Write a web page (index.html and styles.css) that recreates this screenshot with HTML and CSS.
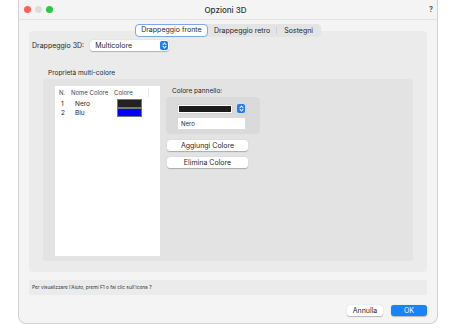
FILE: index.html
```html
<!DOCTYPE html>
<html lang="it">
<head>
	<meta charset="UTF-8">
	<title>Opzioni 3D</title>
	<link rel="stylesheet" href="styles.css">
</head>
<body>
	<div class="window">
		<div class="titlebar">
			<div class="lights">
				<span class="light red"></span>
				<span class="light gray"></span>
				<span class="light green"></span>
			</div>
			<div class="title">Opzioni 3D</div>
			<div class="help-q">?</div>
		</div>
		<div class="content">
			<div class="tabs">
				<span class="tab active">Drappeggio fronte</span>
				<span class="tab">Drappeggio retro</span>
				<span class="tab-sep"></span>
				<span class="tab last">Sostegni</span>
			</div>
			<div class="tabbox">
				<div class="row-3d">
					<span class="label">Drappeggio 3D:</span>
					<div class="popup">
						<span>Multicolore</span>
						<span class="stepper"></span>
					</div>
				</div>
				<div class="section-title">Proprietà multi-colore</div>
				<div class="inner">
					<div class="list">
						<div class="list-head">
							<span class="col-n">N.</span>
							<span class="col-name">Nome Colore</span>
							<span class="col-col">Colore</span>
						</div>
						<div class="list-row">
							<span class="col-n">1</span>
							<span class="col-name">Nero</span>
							<span class="swatch black"></span>
						</div>
						<div class="list-row">
							<span class="col-n">2</span>
							<span class="col-name">Blu</span>
							<span class="swatch blue"></span>
						</div>
					</div>
					<div class="side">
						<div class="side-label">Colore pannello:</div>
						<div class="panel-box">
							<div class="color-popup">
								<span class="color-bar"></span>
								<span class="stepper"></span>
							</div>
							<div class="field">Nero</div>
						</div>
						<div class="btn wide">Aggiungi Colore</div>
						<div class="btn wide">Elimina Colore</div>
					</div>
				</div>
			</div>
			<div class="helpbar">Per visualizzare l'Aiuto, premi F1 o fai clic sull'icona ?</div>
			<div class="footer">
				<div class="btn">Annulla</div>
				<div class="btn primary">OK</div>
			</div>
		</div>
	</div>
</body>
</html>
```
FILE: styles.css
```css
*{
	margin: 0;
	padding: 0;
	box-sizing: border-box;
}
body{
	background: #fff;
	font-family: Inter, "Liberation Sans", sans-serif;
	font-size: 7px;
	color: #262626;
}
.window{
	margin-left: 18px;
	width: 420px;
	height: 324px;
	background: #f4f4f4;
	border: 1px solid #d2d2d2;
	border-top: none;
	border-radius: 0 0 8px 8px;
	display: flex;
	flex-direction: column;
}
.titlebar{
	height: 20px;
	border-bottom: 1px solid #e2e2e2;
	display: flex;
	align-items: center;
	padding: 0 5px;
}
.lights{
	display: flex;
	gap: 4px;
	width: 60px;
}
.light{
	width: 7px;
	height: 7px;
	border-radius: 50%;
}
.red{ background: #fe5f57; }
.gray{ background: #dcdcdc; }
.green{ background: #28c840; }
.title{
	flex: 1;
	text-align: center;
	font-size: 8px;
	font-weight: 500;
	color: #333;
	margin-left: -6px;
}
.help-q{
	width: 60px;
	text-align: right;
	font-size: 7px;
	font-weight: 700;
	color: #555;
	margin-right: -1px;
}
.content{
	flex: 1;
	padding: 4px 10px 0 10px;
	display: flex;
	flex-direction: column;
}
.tabs{
	align-self: center;
	display: flex;
	align-items: center;
	height: 13px;
	background: #e4e4e4;
	border-radius: 4px;
	margin-bottom: -6px;
	position: relative;
	z-index: 2;
}
.tab{
	padding: 0 6px;
	line-height: 13px;
	white-space: nowrap;
}
.tab.last{
	padding: 0 8px 0 7px;
}
.tab.active{
	background: #fff;
	border: 1.5px solid #7ba7ee;
	border-radius: 4px;
	line-height: 10px;
	height: 13px;
	padding: 0;
	width: 73px;
	text-align: center;
}
.tab-sep{
	width: 1px;
	height: 7px;
	background: #cfcfcf;
}
.tabbox{
	height: 241px;
	background: #ebebeb;
	border-radius: 4px;
	padding: 9px 3px 0 3px;
}
.row-3d{
	display: flex;
	align-items: center;
	gap: 6px;
}
.popup{
	width: 79px;
	height: 11px;
	background: #fff;
	border-radius: 3px;
	box-shadow: 0 0.5px 1px rgba(0,0,0,0.25);
	display: flex;
	align-items: center;
	justify-content: space-between;
	padding: 0 1px 0 5px;
}
.stepper{
	width: 8px;
	height: 9px;
	background: #1f7cf2;
	border-radius: 2px;
	position: relative;
}
.stepper::before,
.stepper::after{
	content: "";
	position: absolute;
	left: 3px;
	width: 2px;
	height: 2px;
	border-left: 1px solid #fff;
	border-top: 1px solid #fff;
	transform: rotate(45deg);
}
.stepper::before{ top: 2px; }
.stepper::after{ top: 4px; transform: rotate(225deg); }
.section-title{
	margin: 18px 0 0 16px;
	line-height: 8px;
	font-size: 6.5px;
}
.inner{
	margin: 2px 11px 0 11px;
	height: 182px;
	background: #e3e3e3;
	border-radius: 4px;
	padding: 7px 12px;
	display: flex;
	gap: 6px;
}
.list{
	width: 105px;
	height: 170px;
	background: #fff;
}
.list-head{
	display: flex;
	height: 13px;
	align-items: center;
	color: #444;
	font-size: 6px;
	position: relative;
}
.list-head::after{
	content: "";
	position: absolute;
	left: 93px;
	top: 2px;
	width: 1px;
	height: 9px;
	background: #e6e6e6;
}
.col-n{
	width: 12px;
	padding-left: 4px;
}
.col-name{
	width: 46px;
	padding-left: 4px;
}
.col-col{
	padding-left: 1px;
}
.list-row{
	display: flex;
	height: 9px;
	align-items: center;
	font-size: 6.5px;
}
.list-row .col-n{
	padding-left: 6px;
}
.list-row .col-name{
	width: 50px;
	padding-left: 8px;
}
.swatch{
	width: 25px;
	height: 9px;
	border: 1px solid #777;
}
.swatch.black{ background: #222; }
.swatch.blue{ background: #0000ff; }
.side{
	width: 94px;
	display: flex;
	flex-direction: column;
}
.side-label{
	padding: 1px 0 0 6px;
	line-height: 8px;
	height: 11px;
	font-size: 6.5px;
}
.panel-box{
	height: 37px;
	background: #dadada;
	border-radius: 4px;
	padding: 7px 0 0 12px;
}
.color-popup{
	width: 67px;
	height: 9px;
	display: flex;
	justify-content: space-between;
	align-items: center;
}
.color-bar{
	width: 54px;
	height: 8px;
	background: #1c1c1c;
	border: 1.5px solid #fff;
	box-shadow: 0 0 0 0.5px #ccc;
}
.field{
	margin-top: 5px;
	width: 67px;
	height: 11px;
	background: #fff;
	font-size: 6px;
	line-height: 11px;
	padding-left: 3px;
}
.btn{
	height: 11px;
	background: #fff;
	border-radius: 3px;
	box-shadow: 0 0.5px 1px rgba(0,0,0,0.25);
	text-align: center;
	line-height: 11px;
	font-size: 7px;
}
.btn.wide{
	width: 81px;
	margin-left: 1px;
	margin-top: 6px;
}
.helpbar{
	margin-top: 8px;
	height: 15px;
	background: #ebebeb;
	border-radius: 3px;
	font-size: 4.8px;
	line-height: 15px;
	padding-left: 3px;
	color: #333;
}
.footer{
	display: flex;
	justify-content: flex-end;
	gap: 8px;
	margin-top: 10px;
}
.footer .btn{
	width: 36px;
}
.btn.primary{
	background: #1a82fb;
	color: #fff;
}
```
